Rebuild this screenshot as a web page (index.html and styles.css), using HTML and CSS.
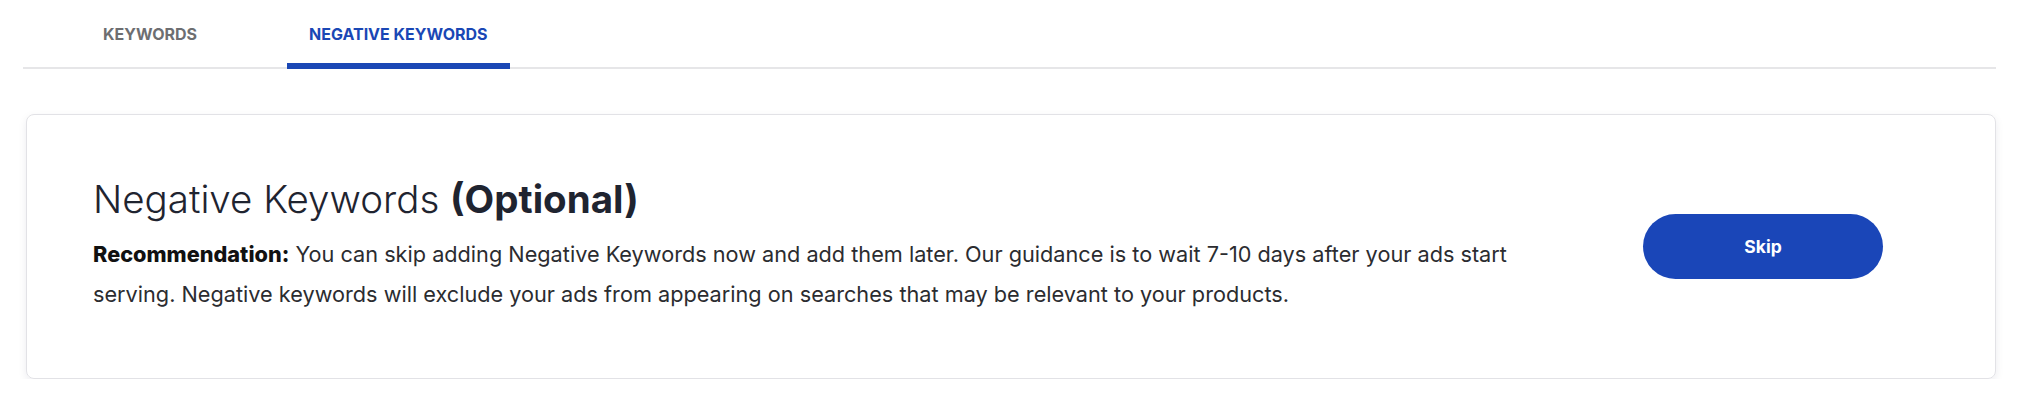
FILE: index.html
```html
<!DOCTYPE html>
<html lang="en">
<head>
<meta charset="utf-8">
<title>Negative Keywords</title>
<link rel="stylesheet" href="styles.css">
</head>
<body>
<nav class="tabs">
  <div class="tab">KEYWORDS</div>
  <div class="tab tab-active">NEGATIVE KEYWORDS</div>
</nav>
<section class="card">
  <div class="card-text">
    <h2 class="title"><span class="title-light">Negative Keywords</span> <span class="title-bold">(Optional)</span></h2>
    <p class="desc"><strong>Recommendation:</strong> You can skip adding Negative Keywords now and add them later. Our guidance is to wait 7-10 days after your ads start serving. Negative keywords will exclude your ads from appearing on searches that may be relevant to your products.</p>
  </div>
  <button class="skip">Skip</button>
</section>
</body>
</html>
```
FILE: styles.css
```css
* { box-sizing: border-box; }
body {
  margin: 0;
  background: #ffffff;
  font-family: Inter, "Liberation Sans", sans-serif;
  color: #2b2c30;
}
.tabs {
  display: flex;
  gap: 68px;
  margin: 0 32px 0 23px;
  padding-left: 58px;
  border-bottom: 2px solid #e6e6e8;
}
.tab {
  height: 69px;
  padding: 4px 22px 0;
  display: flex;
  align-items: center;
  font-size: 16px;
  font-weight: 700;
  color: #6d6e71;
  border-bottom: 6px solid transparent;
  margin-bottom: -2px;
}
.tab-active {
  color: #1a47b5;
  border-bottom-color: #1a47b5;
}
.card {
  margin: 45px 32px 0 26px;
  height: 265px;
  border: 1px solid #e2e2e6;
  border-radius: 8px;
  box-shadow: 0 3px 8px rgba(30, 30, 60, 0.08);
  display: flex;
  align-items: center;
  justify-content: space-between;
  padding: 0 112px 0 66px;
}
.card-text {
  width: 1450px;
}
.title {
  margin: 0 0 15px;
  font-size: 38.5px;
  line-height: 40px;
  color: #1f2430;
  font-weight: 300;
}
.title-bold { font-weight: 700; }
.desc {
  margin: 0;
  font-size: 21.7px;
  line-height: 40px;
  color: #2b2c30;
}
.desc strong { font-weight: 800; color: #111; }
.skip {
  flex: none;
  width: 240px;
  height: 65px;
  border: none;
  border-radius: 33px;
  background: #1a46b8;
  color: #ffffff;
  font-family: Inter, "Liberation Sans", sans-serif;
  font-size: 17.5px;
  font-weight: 700;
}
```
